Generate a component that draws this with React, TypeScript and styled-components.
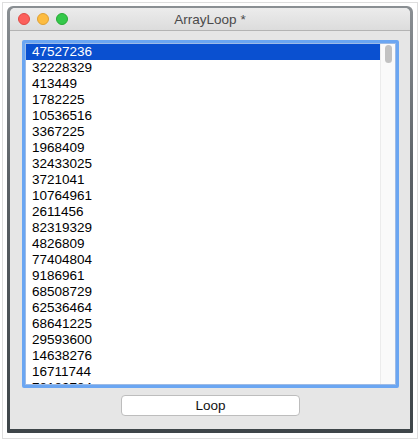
import React from "react";
import styled, { createGlobalStyle } from "styled-components";

const Global = createGlobalStyle`
  html, body { margin: 0; padding: 0; background: #ffffff; }
  body { font-family: "Liberation Sans", Arial, sans-serif; }
`;

const Page = styled.div`
  width: 420px;
  height: 443px;
  padding: 2px;
  box-sizing: border-box;
  background: #ffffff;
`;

const Frame = styled.div`
  width: 416px;
  height: 437px;
  box-sizing: border-box;
  border: 1px solid #dedede;
  padding: 3px 4px 5px 4px;
  display: flex;
`;

const Shadow = styled.div`
  flex: 1;
  display: flex;
  background: linear-gradient(180deg, #8a8f93 0%, #5b6166 40%, #3e4549 100%);
  padding: 2px 3px 4px 3px;
  border-radius: 6px 6px 1px 1px;
`;

const Window = styled.div`
  flex: 1;
  display: flex;
  flex-direction: column;
  background: #e6e6e6;
  border-radius: 5px 5px 0 0;
  overflow: hidden;
`;

const TitleBar = styled.div`
  height: 22px;
  flex: none;
  position: relative;
  display: flex;
  align-items: center;
  justify-content: center;
  background: linear-gradient(180deg, #ececec 0%, #dcdcdc 100%);
  border-bottom: 1px solid #b4b4b4;
`;

const Lights = styled.div`
  position: absolute;
  left: 8px;
  top: 5px;
  display: flex;
  gap: 7px;
`;

const Light = styled.div<{ $bg: string; $bd: string }>`
  width: 12px;
  height: 12px;
  box-sizing: border-box;
  border-radius: 50%;
  background: ${(p) => p.$bg};
  border: 1px solid ${(p) => p.$bd};
`;

const Title = styled.div`
  font-size: 13.5px;
  color: #4a4a4a;
`;

const Content = styled.div`
  flex: 1;
  display: flex;
  flex-direction: column;
  align-items: center;
  padding: 9px 11px 13px 12px;
  gap: 7px;
`;

const ListRing = styled.div`
  align-self: stretch;
  height: 348px;
  box-sizing: border-box;
  border: 3px solid #6ba6f2;
  border-radius: 2px;
  display: flex;
  background: #ffffff;
  overflow: hidden;
`;

const ListInner = styled.div`
  flex: 1;
  display: flex;
  border: 1px solid #9dbbe6;
  overflow: hidden;
`;

const Rows = styled.div`
  flex: 1;
  display: flex;
  flex-direction: column;
  overflow: hidden;
`;

const Row = styled.div<{ $sel?: boolean }>`
  height: 16px;
  flex: none;
  line-height: 16px;
  padding-left: 6px;
  font-size: 13.5px;
  color: ${(p) => (p.$sel ? "#ffffff" : "#000000")};
  background: ${(p) => (p.$sel ? "#0a50d0" : "transparent")};
  white-space: nowrap;
`;

const Scroll = styled.div`
  width: 14px;
  flex: none;
  background: #fafafa;
  border-left: 1px solid #ececec;
  display: flex;
  justify-content: center;
  padding-top: 1px;
`;

const Thumb = styled.div`
  width: 7px;
  height: 18px;
  border-radius: 4px;
  background: #c2c2c2;
`;

const Button = styled.button`
  width: 179px;
  height: 21px;
  box-sizing: border-box;
  border: 1px solid #bdbdbd;
  border-radius: 4px;
  background: #ffffff;
  font-family: "Liberation Sans", Arial, sans-serif;
  font-size: 13.5px;
  color: #111111;
  padding: 0;
`;

const numbers = [
  "47527236", "32228329", "413449", "1782225", "10536516", "3367225",
  "1968409", "32433025", "3721041", "10764961", "2611456", "82319329",
  "4826809", "77404804", "9186961", "68508729", "62536464", "68641225",
  "29593600", "14638276", "16711744", "78189784",
];

export default function App() {
  return (
    <>
      <Global />
      <Page>
        <Frame>
          <Shadow>
            <Window>
              <TitleBar>
                <Lights>
                  <Light $bg="#fc605c" $bd="#de4a45" />
                  <Light $bg="#fdbc40" $bd="#dea134" />
                  <Light $bg="#34c84a" $bd="#27aa35" />
                </Lights>
                <Title>ArrayLoop *</Title>
              </TitleBar>
              <Content>
                <ListRing>
                  <ListInner>
                    <Rows>
                      {numbers.map((n, i) => (
                        <Row key={i} $sel={i === 0}>
                          {n}
                        </Row>
                      ))}
                    </Rows>
                    <Scroll>
                      <Thumb />
                    </Scroll>
                  </ListInner>
                </ListRing>
                <Button>Loop</Button>
              </Content>
            </Window>
          </Shadow>
        </Frame>
      </Page>
    </>
  );
}
